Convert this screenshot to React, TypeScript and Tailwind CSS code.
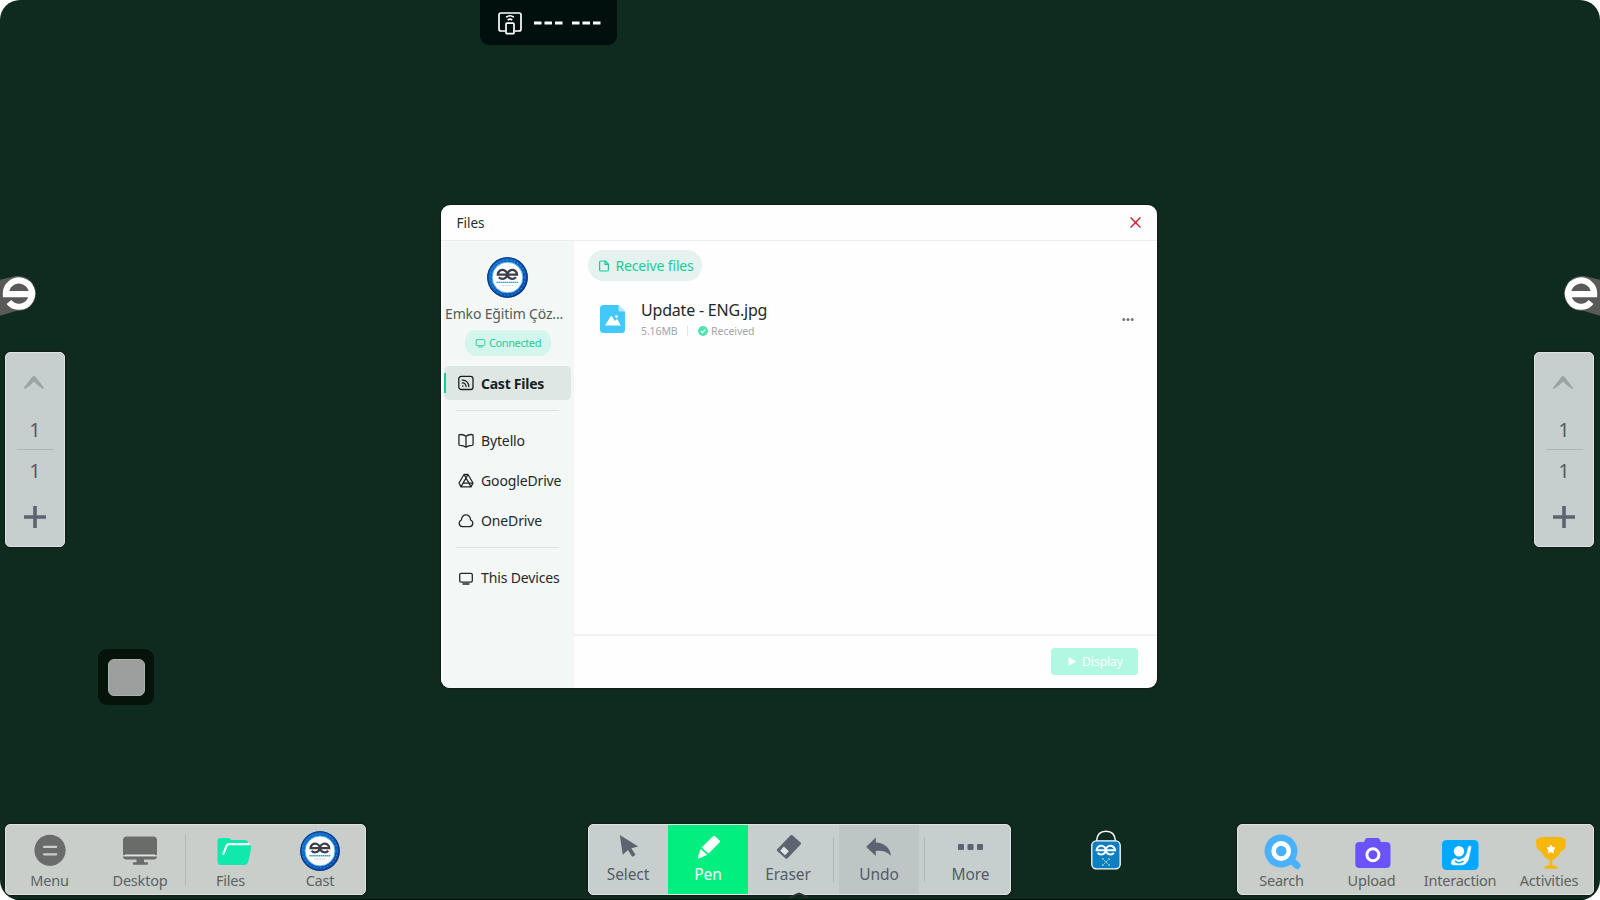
import type { ReactNode } from 'react';

const EGlyph = ({ color, width = 6 }: { color: string; width?: number }) => (
  <path d="M-12.5 .8H13A13.1 13.1 0 1 0 10 8.6" fill="none" stroke={color} strokeWidth={width} />
);

const Avatar = ({ size }: { size: number }) => (
  <svg width={size} height={size} viewBox="0 0 41 41" className="shrink-0">
    <defs>
      <linearGradient id="avatarRing" x1="0" y1="0" x2="1" y2="1">
        <stop offset="0" stopColor="#1379cf" />
        <stop offset=".5" stopColor="#0f5fc0" />
        <stop offset="1" stopColor="#0a3fa4" />
      </linearGradient>
    </defs>
    <circle cx="20.5" cy="20.5" r="20.3" fill="url(#avatarRing)" />
    <circle cx="20.5" cy="20.5" r="19.7" fill="none" stroke="#0b3578" strokeWidth="1.1" />
    <circle cx="20.5" cy="20.5" r="17.6" fill="none" stroke="#2489dc" strokeWidth="1.2" strokeDasharray="1.5 2.2" />
    <circle cx="20.5" cy="20.5" r="15.4" fill="#fff" stroke="#4aaae6" strokeWidth="1" />
    <g transform="translate(15.5 17.3) scale(-.36 .34)"><EGlyph color="#3c3f49" width={6.5} /></g>
    <g transform="translate(25.3 17.3) scale(.36 .34)"><EGlyph color="#3c3f49" width={6.5} /></g>
    <path d="M9.500 25.400H31.500" stroke="#3d9aca" strokeWidth="1.400" strokeDasharray="1.600 .4" />
    <path d="M14.500 28.600H26.500" stroke="#c3c7c9" strokeWidth="1" strokeDasharray="1 .5" />
  </svg>
);

const EdgeHandle = ({ flip = false }: { flip?: boolean }) => (
  <svg width="36" height="43" viewBox="0 0 36 43" className={flip ? '-scale-x-100' : ''}>
    <path d="M37 5 20 1A17.300 17.300 0 0 0 15 34.500L37 41Z" fill="#595959" />
    <circle cx="17.300" cy="18.500" r="17.200" fill="#5a5a5a" />
    <g transform="translate(17.100 18.400)"><EGlyph color="#fff" width={6.2} /></g>
  </svg>
);

const PageRail = () => (
  <div className="flex h-[195px] w-[60px] flex-col items-center rounded-[5px] border border-[#dde3e1] bg-[#c6cfcd] text-[20px] leading-[24px] text-[#555b68] shadow-[0_0_2px_#000]">
    <svg width="22" height="14" viewBox="0 0 22 14" className="mr-[2px] mt-[22px]">
      <path d="M.5 13.300 9 2.200Q11 0 13 2.200L21.300 13.300 19.600 13.800Q17 12.500 11 6.800 5 12.500 2.200 13.800Z" fill="#9ca5a5" />
    </svg>
    <span className="mt-[29px]">1</span>
    <div className="mt-[7px] h-px w-[37px] bg-[#aeb6b5]" />
    <span className="mt-[9px]">1</span>
    <svg width="22" height="22" viewBox="0 0 22 22" className="mt-[23px]">
      <path d="M11 0V22M0 11H22" stroke="#5d6371" strokeWidth="3.600" />
    </svg>
  </div>
);

const DockItem = ({ label, className, children }: { label: string; className: string; children: ReactNode }) => (
  <div className={`flex shrink-0 flex-col items-center pt-[6px] ${className}`}>
    <div className="flex h-10 w-10 items-center justify-center">{children}</div>
    <span className="-mt-px text-[14.5px] leading-5 tracking-[-0.2px] text-[#5c6261]">{label}</span>
  </div>
);

const ToolItem = ({ label, className, children }: { label: string; className: string; children: ReactNode }) => (
  <div className={`flex h-full flex-col items-center pt-[7px] ${className}`}>
    <div className="flex h-[30px] items-center justify-center">{children}</div>
    <span className="mt-[2px] text-[15.5px] leading-5 tracking-[-0.1px]">{label}</span>
  </div>
);

const NavItem = ({ label, children }: { label: string; children: ReactNode }) => (
  <div className="flex h-10 w-full items-center gap-[7px] pl-[15px] text-[14px] tracking-[-0.14px] text-[#24282a]">
    {children}
    <span className="-mt-[2px] whitespace-nowrap">{label}</span>
  </div>
);

const line = { fill: 'none', stroke: 'currentColor', strokeWidth: 1.3, strokeLinejoin: 'round', strokeLinecap: 'round' } as const;

const MonitorIcon = ({ size }: { size: number }) => (
  <svg width={size} height={size} viewBox="0 0 16 16" {...line}>
    <rect x="1.700" y="2.400" width="12.600" height="8.700" rx="1.400" />
    <path d="M5 13H11" />
  </svg>
);

const Sidebar = () => (
  <aside className="flex w-[133px] shrink-0 flex-col rounded-bl-[9px] border-l-2 border-[#fafcfb] bg-[#f3f7f6]">
    <div className="ml-[44px] mt-[15.500px] h-[41px]"><Avatar size={41} /></div>
    <div className="mt-[6.500px] w-full whitespace-nowrap pl-[2px] text-[14px] leading-5 tracking-[-0.15px] text-[#555b5a]">Emko Eğitim Çöz...</div>
    <div className="ml-[22px] mt-[6px] flex h-[26px] w-[86px] items-center justify-center gap-[3px] rounded-[11px] bg-[#d5f6ec] text-[11px] tracking-[-0.4px] text-[#1ccf9c]">
      <MonitorIcon size={11} />
      <span>Connected</span>
    </div>
    <div className="ml-px mt-[10px] flex h-[34px] w-[127px] items-center rounded-[5px] bg-[#dfe7e5] text-[#1b1e1f]">
      <div className="h-5 w-[2px] bg-[#12cb98]" />
      <svg width="16" height="16" viewBox="0 0 16 16" {...line} className="ml-[12px]">
        <rect x=".8" y="1.300" width="14.200" height="13.200" rx="2.600" />
        <path d="M4.300 5.200A6 6 0 0 1 10.800 11.500M4.300 7.900A3.400 3.400 0 0 1 8 11.500M4.600 11H5" />
      </svg>
      <span className="ml-[7px] text-[14px] font-bold tracking-[-0.25px]">Cast Files</span>
    </div>
    <div className="ml-[13px] mt-[10px] h-px w-[103px] shrink-0 bg-[#dde2e1]" />
    <nav className="mt-[10px] w-full">
      <NavItem label="Bytello">
        <svg width="16" height="16" viewBox="0 0 16 16" {...line}>
          <path d="M8 3.200Q6 1.400 2.200 1.500 .9 1.500 .9 2.700V11.200Q.9 12.300 2 12.400 5.800 12.600 8 14.300 10.200 12.600 14 12.400 15.100 12.300 15.100 11.200V2.700Q15.100 1.500 13.800 1.500 10 1.400 8 3.200V14.200" />
        </svg>
      </NavItem>
      <NavItem label="GoogleDrive">
        <svg width="16" height="16" viewBox="0 0 16 16" {...line}>
          <path d="M6 1.500H10L15 10 13 13.900H3L1 10ZM8 5 11 10.100H5ZM6 1.500 8 5M10 1.500 8 5 3 13.900M5 10.100H15M11 10.100 13 13.900" />
        </svg>
      </NavItem>
      <NavItem label="OneDrive">
        <svg width="16" height="16" viewBox="0 0 16 16" {...line}>
          <path d="M4.200 13.700A3.500 3.500 0 0 1 3.400 7C3.700 4 5.500 1.800 8 1.800S12.300 4 12.600 7A3.500 3.500 0 0 1 11.800 13.700Z" />
        </svg>
      </NavItem>
    </nav>
    <div className="ml-[13px] mt-[6px] h-px w-[103px] shrink-0 bg-[#dde2e1]" />
    <div className="mt-[10.500px] w-full">
      <NavItem label="This Devices"><MonitorIcon size={16} /></NavItem>
    </div>
  </aside>
);

const FilesDialog = () => (
  <section className="flex h-[483px] w-[716px] shrink-0 flex-col rounded-[9px] bg-[#fefefe] shadow-[0_0_2px_#000]">
    <header className="flex h-[36px] shrink-0 items-center justify-between border-b border-[#eceeee] pl-[15.500px] pr-[16.500px]">
      <span className="mt-[2px] text-[13.5px] text-[#2b2e30]">Files</span>
      <svg width="11" height="11" viewBox="0 0 11 11"><path d="M.6 .6 10.400 10.400M10.400 .6 .6 10.400" stroke="#d11e2e" strokeWidth="1.400" /></svg>
    </header>
    <div className="flex flex-1">
      <Sidebar />
      <main className="flex flex-1 flex-col">
        <div className="flex flex-1 flex-col items-start pl-[14px] pt-[9px]">
          <div className="flex h-[31px] w-[114px] items-center rounded-full bg-[#e5f2ef] pl-[10px] text-[14px] tracking-[-0.15px] text-[#17cc99]">
            <svg width="12" height="12" viewBox="0 0 12 12" {...line} strokeWidth={1.2}>
              <path d="M2.800 1H7.200L10.400 4.200V9.800Q10.400 11 9.200 11H2.800Q1.600 11 1.600 9.800V2.200Q1.600 1 2.800 1ZM7 1V4.400H10.400" />
            </svg>
            <span className="ml-[5.500px] whitespace-nowrap">Receive files</span>
          </div>
          <div className="mt-[17px] flex w-full items-start pl-[12px] pr-[23px]">
            <svg width="25" height="28" viewBox="0 0 25 28" className="mt-[7px]">
              <path d="M3.500 0H18.500L25 6.500V24.500Q25 28 21.500 28H3.500Q0 28 0 24.500V3.500Q0 0 3.500 0Z" fill="#43c8fb" />
              <path d="M18.500 0 25 6.500H20Q18.500 6.500 18.500 5Z" fill="#b7e9fd" />
              <path d="M5 20.500 10.500 11.500Q11.300 10.500 12.100 11.500L14.800 16 16.400 14.400Q17 13.900 17.600 14.400L20.700 20.500Z" fill="#fff" />
              <circle cx="16.500" cy="11.600" r="1.400" fill="#fff" />
            </svg>
            <div className="ml-[16px] flex flex-col">
              <span className="text-[16px] leading-[24px] tracking-[-0.2px] text-[#24282a]">Update - ENG.jpg</span>
              <div className="flex h-[18px] items-center text-[10.5px] leading-[18px] text-[#a2a5a6]">
                <span className="tracking-[-0.1px]">5.16MB</span>
                <div className="ml-[9px] h-[10px] w-px bg-[#e2e5e5]" />
                <svg width="10" height="10" viewBox="0 0 10 10" className="ml-[10px]">
                  <circle cx="5" cy="5" r="5" fill="#4fe3b6" />
                  <path d="M2.700 5.100 4.400 6.700 7.400 3.600" fill="none" stroke="#fff" strokeWidth="1.200" />
                </svg>
                <span className="ml-[3.500px] tracking-[-0.05px]">Received</span>
              </div>
            </div>
            <svg width="12" height="4" viewBox="0 0 12 4" className="ml-auto mt-[20px]" fill="#777a7b">
              <circle cx="1.800" cy="1.500" r="1.500" /><circle cx="6" cy="1.500" r="1.500" /><circle cx="10.200" cy="1.500" r="1.500" />
            </svg>
          </div>
        </div>
        <footer className="flex h-[54px] items-start justify-end border-t-2 border-[#f1f3f3] pr-[19.500px] pt-[12px]">
          <div className="flex h-[27px] w-[87px] items-center justify-center gap-[6px] rounded-[4px] bg-[#b0f8e2] pl-[3px] text-[12px] text-white">
            <svg width="8" height="9" viewBox="0 0 8 9"><path d="M.5 .8Q.5 0 1.200 .4L7.600 4.100Q8 4.500 7.600 4.900L1.200 8.600Q.5 9 .5 8.200Z" fill="#fff" /></svg>
            <span>Display</span>
          </div>
        </footer>
      </main>
    </div>
  </section>
);

const LeftDock = () => (
  <div className="flex h-[71px] w-[361px] rounded-[5px] border border-[#dde2e0] bg-[#c9cecb] shadow-[0_0_2px_#000]">
    <DockItem label="Menu" className="w-[87px]">
      <svg width="40" height="40" viewBox="0 0 40 40">
        <circle cx="20" cy="19.300" r="15.600" fill="#696c6a" />
        <path d="M14 15.800H26.200M14 23.300H26.200" stroke="#c9cecb" strokeWidth="2.200" strokeLinecap="round" />
      </svg>
    </DockItem>
    <DockItem label="Desktop" className="w-[92px] pl-[2px]">
      <svg width="40" height="40" viewBox="0 0 40 40">
        <path d="M7 5.500H33Q37 5.500 37 9.500V24H3V9.500Q3 5.500 7 5.500Z" fill="#696c6a" />
        <path d="M3 25.600H37Q37 28.600 33 28.600H24V31.300H27Q28 31.300 28 32.600T27 33.800H13.500Q12.800 33.800 12.800 32.600T13.500 31.300H16.500V28.600H7Q3 28.600 3 25.600Z" fill="#696c6a" />
        <path d="M5 24.200H35" stroke="#dfe2e0" strokeWidth="1.400" />
      </svg>
    </DockItem>
    <div className="mt-[10px] h-[50px] w-px bg-[#b4b9b7]" />
    <DockItem label="Files" className="w-[89px]">
      <svg width="40" height="40" viewBox="0 0 40 40">
        <path d="M6.500 10Q6.500 7 9.500 7H18L20.500 9H33.500Q37 9 37 12V14Q41 14 40.300 17L37.300 30.500Q36.300 34 33 34H10Q6.500 34 6.500 30.500Z" fill="#10e8ac" />
        <path d="M12.300 23 15.700 14.500Q16.400 13.100 18 13.100H37.500" fill="none" stroke="#fff" strokeWidth="2.100" strokeLinecap="round" />
      </svg>
    </DockItem>
    <DockItem label="Cast" className="w-[90px]"><Avatar size={40} /></DockItem>
  </div>
);

const Toolbar = () => (
  <div className="flex h-[71px] w-[423px] overflow-hidden rounded-[5px] border border-[#dde3e1] bg-[#c6cfcd] text-[#555b68] shadow-[0_0_2px_#000]">
    <ToolItem label="Select" className="w-[79px] pr-px">
      <svg width="20" height="24" viewBox="0 0 20 24" fill="#5d6371" className="ml-px"><path d="M.8 0 19.200 11.600 12.300 13.200 16.200 19.300Q16.500 20 15.800 20.500L13.900 21.600Q13.200 21.900 12.800 21.200L9 15 3.800 19.800Z" /></svg>
    </ToolItem>
    <ToolItem label="Pen" className="w-[80px] bg-[#02ef80] text-white">
      <svg width="24" height="24" viewBox="0 0 24 24" fill="#fff" className="ml-[2px] -mt-px"><path d="M16.300 1Q17 .400 17.800 1L22.700 5.600Q23.400 6.400 22.700 7.200L11.600 18.600 4.600 12.600ZM3.600 14 10.200 19.800 2.500 23.200Q.500 23.700 1 21.700Z" /></svg>
    </ToolItem>
    <ToolItem label="Eraser" className="w-[80px]">
      <svg width="26" height="26" viewBox="0 0 26 26" className="ml-px">
        <path d="M14.600 1.300Q15.500.600 16.400 1.300L24.600 8.600Q25.400 9.500 24.600 10.400L11.400 24.500Q10.500 25.200 9.600 24.500L1.200 17Q.500 16.100 1.200 15.200Z" fill="#5d6371" />
        <path d="M7.800 12.600 12.800 17.200 9 21.300 4.200 16.700Z" fill="#dfe5e3" />
      </svg>
    </ToolItem>
    <div className="ml-[5px] mt-[12px] h-[45px] w-px bg-[#b0b9b7]" />
    <ToolItem label="Undo" className="ml-[5px] w-[80px] bg-[#bdc6c4]">
      <svg width="26" height="20" viewBox="0 0 26 20" fill="#5d6371"><path d="M9.500.8 9.800.6V5.600C18 5.600 24.500 11 25 19 21 14.500 16 13.600 9.800 13.900V19L.8 10.400Q.3 9.800.8 9.200Z" /></svg>
    </ToolItem>
    <div className="ml-[5px] mt-[12px] h-[45px] w-px bg-[#b0b9b7]" />
    <ToolItem label="More" className="flex-1 pl-[6px]">
      <svg width="26" height="8" viewBox="0 0 26 8" fill="#5d6371"><rect x="0" y="1" width="6" height="6" rx="1" /><rect x="9.500" y="1" width="6" height="6" rx="1" /><rect x="19" y="1" width="6" height="6" rx="1" /></svg>
    </ToolItem>
  </div>
);

const BagShortcut = () => (
  <svg width="30" height="40" viewBox="0 0 30 40">
    <path d="M5.500 11C6 4 10 1.200 15 1.200S24 4 24.500 11" fill="none" stroke="#fff" strokeWidth="1.400" />
    <rect x=".8" y="10.800" width="28.400" height="28" rx="4.500" fill="#0c7fc3" stroke="#fff" strokeWidth="1.300" />
    <g transform="translate(10.200 20) scale(-.35 .33)"><EGlyph color="#fff" /></g>
    <g transform="translate(19.400 20) scale(.35 .33)"><EGlyph color="#fff" /></g>
    <path d="M11.500 30V28.500H13M17 28.500H18.500V30M11.500 34V35.500H13M17 35.500H18.500V34M12.500 29.500 15 32 12.500 34.500M17.500 29.500 15 32 17.500 34.500" fill="none" stroke="#9fd0bd" strokeWidth=".8" />
  </svg>
);

const RightDock = () => (
  <div className="flex h-[71px] w-[357px] rounded-[5px] border border-[#dde2e0] bg-[#c9cecb] shadow-[0_0_2px_#000]">
    <DockItem label="Search" className="w-[87px]">
      <svg width="40" height="40" viewBox="0 0 40 40">
        <path d="M28 28 35 34.500" stroke="#4ab2fd" strokeWidth="7" strokeLinecap="round" />
        <circle cx="19" cy="20" r="16.500" fill="#4ab2fd" />
        <circle cx="19.200" cy="20" r="7.600" fill="#4ab2fd" stroke="#fff" strokeWidth="4.600" />
      </svg>
    </DockItem>
    <DockItem label="Upload" className="w-[93px]">
      <svg width="40" height="40" viewBox="0 0 40 40">
        <path d="M15 7H26Q27 7 27.500 8L29 11H34Q38.500 11 38.500 15V33Q38.500 37 34 37H7.500Q3.300 37 3.300 33V15Q3.300 11 7.500 11H12L13.500 8Q14 7 15 7Z" fill="#6b53fa" />
        <circle cx="20.900" cy="23.700" r="6" fill="none" stroke="#fff" strokeWidth="3" />
      </svg>
    </DockItem>
    <DockItem label="Interaction" className="w-[84px]">
      <svg width="40" height="40" viewBox="0 0 40 40">
        <rect x="2" y="9" width="36.500" height="30" rx="4.500" fill="#03a8ff" />
        <circle cx="19" cy="20.300" r="5.200" fill="#fff" />
        <path d="M29.800 15Q31.300 15 31 16.500L28.500 28Q26.500 34 21 34H14Q10.500 34 11.500 30.500 12.500 27.500 15.500 27.500L18.500 29 23 27.500Q26 25.500 27 22L28.300 16.200Q28.700 15 29.800 15Z" fill="#fff" stroke="#fff" strokeWidth=".5" />
        <path d="M15.500 30.300Q19 33 23 30.300" fill="none" stroke="#03a8ff" strokeWidth="1.500" strokeLinecap="round" />
      </svg>
    </DockItem>
    <DockItem label="Activities" className="w-[91px] pl-[3px]">
      <svg width="40" height="40" viewBox="0 0 40 40" className="ml-[4px]">
        <path d="M9 4.500H31Q32 6 34.500 6 36.500 6 36.500 8V12.500Q36.500 18.500 30.500 21 28 27.500 21.500 30V35.500Q26 36 27 37.500 28 39.700 26 39.700H14Q12 39.700 13 37.500 14 36 18.500 35.500V30Q12 27.500 9.500 21 3.500 18.500 3.500 12.500V8Q3.500 6 5.500 6 8 6 9 4.500Z" fill="#f8b70d" />
        <path d="M20 13.300 21.400 16 24.500 16.600 22.400 18.900 22.800 22 20 20.700 17.200 22 17.600 18.900 15.500 16.600 18.600 16Z" fill="#fff" stroke="#fff" strokeLinejoin="round" />
      </svg>
    </DockItem>
  </div>
);

export default function App() {
  return (
    <div className="h-[900px] w-[1600px] overflow-hidden bg-white">
      <div className="flex h-full w-full flex-col overflow-hidden rounded-[20px] bg-[#0f2b1f] font-['Noto_Sans','Open_Sans',sans-serif]">
        <div className="h-[205px] shrink-0 pl-[480px]">
          <div className="flex h-[45px] w-[137px] items-center rounded-b-[9px] bg-[#01100d]">
            <svg width="24" height="23" viewBox="0 0 24 23" className="ml-[17.500px] mt-[1px]" fill="none" stroke="#fff" strokeWidth="1.700">
              <path d="M7.500 19H3Q1 19 1 17V3Q1 1 3 1H21Q23 1 23 3V17Q23 19 21 19H16.500" />
              <rect x="8" y="11.200" width="8" height="10.500" rx="1" />
              <path d="M8.200 5.200Q12 2.300 15.800 5.200M9.800 8Q12 6.200 14.200 8" />
            </svg>
            <svg width="67" height="4" viewBox="0 0 67 4" className="ml-[12.500px] mt-[1px]">
              <path d="M0 2H7.500M10.500 2H18M21 2H28.500M38 2H45.500M48.500 2H56M59 2H66.500" stroke="#fff" strokeWidth="3.200" />
            </svg>
          </div>
        </div>
        <div className="flex h-[619px] shrink-0 items-start">
          <div className="flex w-[441px] flex-col items-start pt-[70px]">
            <EdgeHandle flip />
            <div className="ml-[5px] mt-[34px]"><PageRail /></div>
            <div className="ml-[98px] mt-[102px] flex h-[56px] w-[56px] items-center justify-center rounded-[9px] bg-[#05130b]">
              <div className="h-[37px] w-[37px] rounded-[6px] border border-[#a9b3b0] bg-[#9c9f9e]" />
            </div>
          </div>
          <FilesDialog />
          <div className="flex flex-1 flex-col items-end pt-[70px]">
            <EdgeHandle />
            <div className="mr-[6px] mt-[34px]"><PageRail /></div>
          </div>
        </div>
        <footer className="relative flex h-[76px] shrink-0 items-start border-b border-[#04140d] pl-[5px]">
          <LeftDock />
          <div className="ml-[222px]"><Toolbar /></div>
          <div className="ml-[80px] mt-[6px]"><BagShortcut /></div>
          <div className="ml-[116px]"><RightDock /></div>
          <svg width="22" height="8" viewBox="0 0 22 8" className="absolute left-[788px] top-[67px]">
            <path d="M1.500 6.500 11 2.600 20.500 6.500" fill="none" stroke="#27302d" strokeWidth="2" strokeLinejoin="round" />
          </svg>
        </footer>
      </div>
    </div>
  );
}
